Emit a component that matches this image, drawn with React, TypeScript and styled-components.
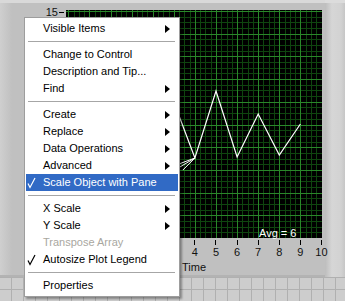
import React from "react";
import styled, { createGlobalStyle } from "styled-components";

const GlobalStyle = createGlobalStyle`
  html, body {
    margin: 0;
    padding: 0;
  }
  body {
    font-family: "Liberation Sans", Arial, sans-serif;
    font-size: 11px;
    color: #000;
  }
`;

// x axis: 21.1px per unit, value 10 sits at the plot's right edge
const UNIT_X = 21.1;
const PLOT_W = 256;
const PLOT_H = 228;
const MAJOR_Y = 22.7;
const FIRST_LABEL = 4; // lower values sit under the popup menu

const xOf = (u: number) => PLOT_W - 0.5 - (10 - u) * UNIT_X;

const Page = styled.div`
  position: relative;
  width: 345px;
  height: 301px;
  overflow: hidden;
  background-color: #cdcdcd;
  background-image: linear-gradient(#b0b0b0 1px, transparent 1px),
    linear-gradient(90deg, #b0b0b0 1px, transparent 1px);
  background-size: 12px 12px;
  background-position: 11px 1px;
`;

const Frame = styled.div`
  display: flex;
  height: 277px;
`;

const Panel = styled.div`
  position: relative;
  z-index: 1;
  width: 325px;
  box-sizing: border-box;
  padding-top: 7px;
  border-top: 3px solid #d9d9d9;
  border-bottom: 2px solid #b3b3b3;
  background: linear-gradient(90deg, #cfcfcf 0, #c0c0c0 12px);
`;

const RightBevel = styled.div`
  flex: 1;
  border-top: 3px solid #dcdcdc;
  background: linear-gradient(90deg, #bdbdbd 0, #d6d6d6 35%, #d2d2d2 80%, #c6c6c6 100%);
`;

const PlotRow = styled.div`
  display: flex;
`;

const YAxis = styled.div`
  width: 66px;
  height: ${PLOT_H}px;
`;

const YTickRow = styled.div`
  display: flex;
  align-items: center;
  justify-content: flex-end;
  margin-top: -4px;
  padding-right: 2px;
  line-height: 12px;
  color: #111;
`;

const YTick = styled.span`
  width: 5px;
  height: 1px;
  margin-left: 1px;
  background: #000;
`;

const PlotBox = styled.div`
  position: relative;
  width: ${PLOT_W}px;
  height: ${PLOT_H}px;
  background: #000;
`;

const AvgLabel = styled.span`
  position: absolute;
  left: 193px;
  top: 217px;
  line-height: 12px;
  color: #fff;
  white-space: nowrap;
`;

const XAxis = styled.div`
  display: flex;
  margin-top: 2px;
  margin-left: ${66 + xOf(FIRST_LABEL) - UNIT_X / 2}px;
`;

const XTickCell = styled.div`
  display: flex;
  flex-direction: column;
  align-items: center;
  width: ${UNIT_X}px;
  flex: none;
`;

const XTick = styled.span`
  width: 1px;
  height: 5px;
  background: #000;
`;

const XLabel = styled.span`
  margin-top: 1px;
  line-height: 12px;
  color: #111;
`;

const AxisTitle = styled.div`
  width: ${PLOT_W}px;
  margin: 3px 0 0 66px;
  text-align: center;
  line-height: 12px;
  color: #111;
`;

const Menu = styled.div`
  position: absolute;
  z-index: 2;
  left: 24px;
  top: 17px;
  width: 156px;
  box-sizing: border-box;
  padding: 2px 1px;
  border: 1px solid #9d9d9d;
  background: #fff;
  box-shadow: 2px 2px 2px rgba(0, 0, 0, 0.35);
`;

const Item = styled.div<{ $active?: boolean; $disabled?: boolean }>`
  display: flex;
  align-items: center;
  height: 17px;
  padding-right: 8px;
  line-height: 17px;
  white-space: nowrap;
  background: ${(p) => (p.$active ? "#316ac5" : "transparent")};
  color: ${(p) => (p.$active ? "#fff" : p.$disabled ? "#a9a79f" : "#000")};
`;

const CheckSlot = styled.span`
  display: flex;
  align-items: center;
  width: 17px;
  height: 17px;
  padding-left: 1px;
  box-sizing: border-box;
  flex: none;
`;

const Label = styled.span`
  flex: 1;
`;

const Separator = styled.div`
  height: 1px;
  margin: 4px 3px 4px 2px;
  background: #a6a6a6;
`;

const Check = () => (
  <svg width="9" height="12" viewBox="0 0 9 12">
    <path d="M1 6.5 L3 10.5 L8 1" fill="none" stroke="currentColor" strokeWidth="1.2" />
  </svg>
);

const Arrow = () => (
  <svg width="5" height="8" viewBox="0 0 5 8">
    <polygon points="0,0 5,4 0,8" fill="#000" />
  </svg>
);

type Entry =
  | { sep: true }
  | { label: string; sub?: boolean; checked?: boolean; active?: boolean; disabled?: boolean };

const entries: Entry[] = [
  { label: "Visible Items", sub: true },
  { sep: true },
  { label: "Change to Control" },
  { label: "Description and Tip..." },
  { label: "Find", sub: true },
  { sep: true },
  { label: "Create", sub: true },
  { label: "Replace", sub: true },
  { label: "Data Operations", sub: true },
  { label: "Advanced", sub: true },
  { label: "Scale Object with Pane", checked: true, active: true },
  { sep: true },
  { label: "X Scale", sub: true },
  { label: "Y Scale", sub: true },
  { label: "Transpose Array", disabled: true },
  { label: "Autosize Plot Legend", checked: true },
  { sep: true },
  { label: "Properties" },
];

const wave: [number, number][] = [
  [xOf(2), 150],
  [xOf(3), 92],
  [xOf(4), 148],
  [xOf(5), 81],
  [xOf(6), 147],
  [xOf(7), 104],
  [xOf(8), 145],
  [xOf(9), 114],
];

const Chart = () => {
  const minorV: number[] = [];
  const majorV: number[] = [];
  for (let k = 0; (k * UNIT_X) / 4 < PLOT_W; k++) {
    const x = Math.round(xOf(10) - (k * UNIT_X) / 4) + 0.5;
    (k % 4 === 0 ? majorV : minorV).push(x);
  }
  const minorH: number[] = [];
  const majorH: number[] = [];
  for (let k = 0; (k * MAJOR_Y) / 4 < PLOT_H; k++) {
    const y = Math.round(1 + (k * MAJOR_Y) / 4) + 0.5;
    (k % 4 === 0 ? majorH : minorH).push(y);
  }
  const [fx, fy] = wave[2];
  return (
    <svg width={PLOT_W} height={PLOT_H} style={{ display: "block" }}>
      {minorV.map((x) => (
        <line key={"mv" + x} x1={x} x2={x} y1={0} y2={PLOT_H} stroke="#0f450f" />
      ))}
      {minorH.map((y) => (
        <line key={"mh" + y} x1={0} x2={PLOT_W} y1={y} y2={y} stroke="#0f450f" />
      ))}
      {majorV.map((x) => (
        <line key={"Mv" + x} x1={x} x2={x} y1={0} y2={PLOT_H} stroke="#2a872a" />
      ))}
      {majorH.map((y) => (
        <line key={"Mh" + y} x1={0} x2={PLOT_W} y1={y} y2={y} stroke="#2a872a" />
      ))}
      <polyline
        points={wave.map(([x, y]) => `${x},${y}`).join(" ")}
        fill="none"
        stroke="#fff"
        strokeWidth="1.2"
      />
      <path
        d={`M${fx} ${fy} L${fx - 15} ${fy + 9} M${fx} ${fy} L${fx - 12} ${fy + 12} M${fx} ${fy} L${fx - 16} ${fy + 6}`}
        stroke="#fff"
        strokeWidth="1"
      />
    </svg>
  );
};

export default function App() {
  const ticks = Array.from({ length: 11 - FIRST_LABEL }, (_, i) => i + FIRST_LABEL);
  return (
    <Page>
      <GlobalStyle />
      <Frame>
        <Panel>
          <PlotRow>
            <YAxis>
              <YTickRow>
                15
                <YTick />
              </YTickRow>
            </YAxis>
            <PlotBox>
              <Chart />
              <AvgLabel>Avg = 6</AvgLabel>
            </PlotBox>
          </PlotRow>
          <XAxis>
            {ticks.map((t) => (
              <XTickCell key={t}>
                <XTick />
                <XLabel>{t}</XLabel>
              </XTickCell>
            ))}
          </XAxis>
          <AxisTitle>Time</AxisTitle>
        </Panel>
        <RightBevel />
      </Frame>
      <Menu>
        {entries.map((e, i) =>
          "sep" in e ? (
            <Separator key={i} />
          ) : (
            <Item key={i} $active={e.active} $disabled={e.disabled}>
              <CheckSlot>{e.checked && <Check />}</CheckSlot>
              <Label>{e.label}</Label>
              {e.sub && <Arrow />}
            </Item>
          )
        )}
      </Menu>
    </Page>
  );
}
